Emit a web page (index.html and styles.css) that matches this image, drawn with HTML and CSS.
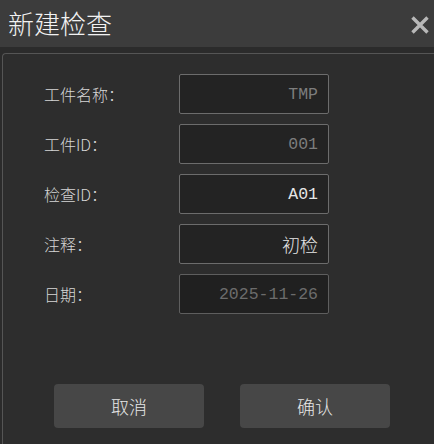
FILE: index.html
```html
<!DOCTYPE html>
<html lang="zh">
<head>
<meta charset="utf-8">
<link rel="stylesheet" href="styles.css">
</head>
<body>
<div class="titlebar">
  <span class="title">新建检查</span>
  <svg class="close" width="20" height="20" viewBox="0 0 20 20"><path d="M2.5 2.5 L17.5 17.5 M17.5 2.5 L2.5 17.5" stroke="#b8b8b8" stroke-width="3.4" stroke-linecap="butt"/></svg>
</div>
<div class="panel">
  <div class="form">
    <label class="label">工件名称：</label>
    <div class="field"><span class="val muted lat">TMP</span></div>
    <label class="label">工件ID：</label>
    <div class="field"><span class="val muted lat">001</span></div>
    <label class="label">检查ID：</label>
    <div class="field"><span class="val bright lat">A01</span></div>
    <label class="label">注释：</label>
    <div class="field"><span class="val bright">初检</span></div>
    <label class="label">日期：</label>
    <div class="field disabled"><span class="val dim lat">2025-11-26</span></div>
  </div>
  <div class="actions">
    <div class="btn">取消</div>
    <div class="btn">确认</div>
  </div>
</div>
</body>
</html>
```
FILE: styles.css
```css
html, body {
  margin: 0;
  padding: 0;
  background: #2b2b2b;
  overflow: hidden;
}
body {
  width: 434px;
  height: 444px;
  font-family: "Liberation Mono", "Noto Sans CJK SC", sans-serif;
}
.titlebar {
  height: 47px;
  background: #3c3c3c;
  display: flex;
  align-items: center;
  justify-content: space-between;
  padding: 0 4px 0 8px;
}
.title {
  font-family: "Noto Sans CJK SC", sans-serif;
  font-size: 26px;
  color: #f2f2f2;
  line-height: 1;
  font-weight: 300;
  margin-top: -1px;
}
.close {
  display: block;
  margin-top: 2px;
}
.panel {
  margin: 6px 0 0 2px;
  width: 432px;
  height: 391px;
  border: 1px solid #555555;
  border-right: 0;
  border-bottom: 0;
  border-radius: 4px 0 0 0;
  background: #2d2d2d;
  box-sizing: border-box;
  padding: 20px 0 0 41px;
}
.form {
  display: grid;
  grid-template-columns: 135px 150px;
  grid-auto-rows: 40px;
  row-gap: 10px;
  align-items: center;
}
.label {
  font-family: "Noto Sans CJK SC", sans-serif;
  font-size: 16px;
  color: #d6d6d6;
  font-weight: 300;
}
.field {
  height: 40px;
  box-sizing: border-box;
  border: 1px solid #6c6c6c;
  border-radius: 2px;
  background: #232323;
  display: flex;
  align-items: center;
  justify-content: flex-end;
  padding-right: 10px;
}
.field.disabled {
  background: #202020;
  border-color: #5e5e5e;
}
.val {
  font-family: "Noto Sans CJK SC", sans-serif;
  font-size: 18px;
  font-weight: 300;
}
.val.lat {
  font-family: "Liberation Mono", monospace;
  font-size: 16.5px;
  font-weight: 400;
}
.muted { color: #7d7d7d; }
.bright { color: #e6e6e6; }
.dim { color: #6c6c6c; }
.actions {
  display: flex;
  gap: 36px;
  margin-top: 70px;
  padding-left: 10px;
}
.btn {
  width: 150px;
  height: 44px;
  background: #474747;
  border-radius: 4px;
  display: flex;
  align-items: center;
  justify-content: center;
  font-family: "Noto Sans CJK SC", sans-serif;
  font-size: 18px;
  font-weight: 300;
  color: #e6e6e6;
}
```
